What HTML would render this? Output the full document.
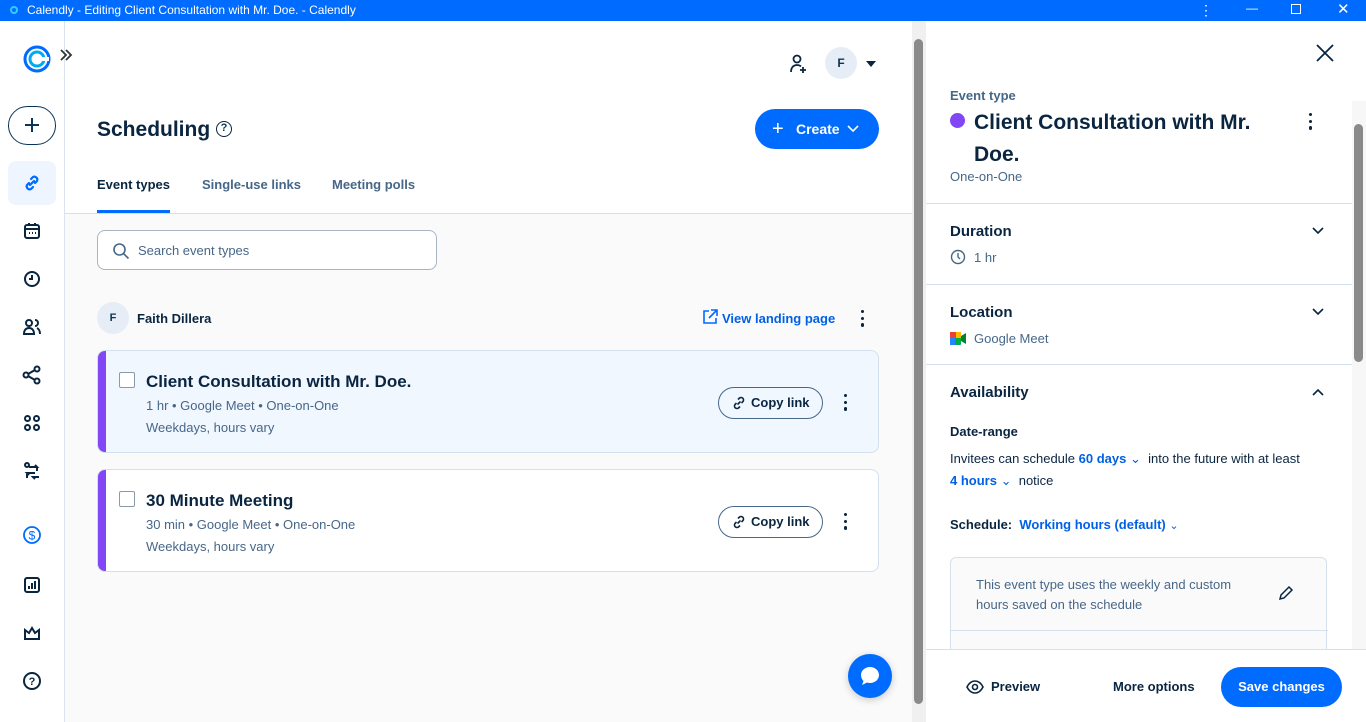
<!DOCTYPE html>
<html><head><meta charset="utf-8"><style>
*{box-sizing:border-box;margin:0;padding:0}
body{width:1366px;height:722px;overflow:hidden;font-family:"Liberation Sans",sans-serif;background:#fff;position:relative;color:#0b3558}
.abs{position:absolute}
.tb{left:0;top:0;width:1366px;height:21px;background:#006bff;color:#fff;font-size:12px;line-height:20px}
.side{left:0;top:21px;width:65px;height:701px;background:#fff;border-right:1px solid #dae4ef}
.ic{position:absolute;left:22px;width:20px;height:20px}
.main{left:65px;top:21px;width:847px;height:701px;background:#fafafa}
.hdr{left:0;top:0;width:847px;height:193px;background:#fff;border-bottom:1px solid #d4e0ed}
.card{position:absolute;left:32px;width:782px;border:1px solid #d4e0ed;border-radius:8px;overflow:hidden}
.card .bar{position:absolute;left:0;top:0;bottom:0;width:8px;background:#8247f5}
.card .cb{position:absolute;left:21px;width:16px;height:16px;border:1px solid #8a9aab;border-radius:2px;background:#fff}
.card h3{position:absolute;left:48px;font-size:17px;font-weight:bold;color:#0a2540}
.card .m{position:absolute;left:48px;font-size:13px;color:#476788}
.copy{position:absolute;left:620px;width:105px;height:32px;border:1px solid #476788;border-radius:16px;font-size:13px;color:#0a2540;font-weight:bold;line-height:30px;padding-left:32px}
.dots{position:absolute;width:4px;height:18px}
.dots i{display:block;width:3.4px;height:3.4px;border-radius:50%;background:#0a2540;margin-bottom:3.3px}
.rp{left:926px;top:21px;width:440px;height:701px;background:#fff}
.sec{position:absolute;left:0;width:426px;border-top:1px solid #d4e0ed}
.rp .t{font-size:15px;font-weight:bold;color:#0a2540}
.blue{color:#0060e6}
</style></head><body>
<div class="abs tb"><span style="position:absolute;left:10px;top:6px;width:8px;height:8px;border:2px solid #3cf;border-radius:50%"></span><span style="position:absolute;left:27px">Calendly - Editing Client Consultation with Mr. Doe. - Calendly</span>
<span style="position:absolute;left:1199px;top:0;font-size:14px">⋮</span><span style="position:absolute;left:1246px;top:-2px">—</span><span style="position:absolute;left:1291px;top:4px;width:10px;height:10px;border:1px solid #fff"></span><span style="position:absolute;left:1337px;top:0;font-size:15px">✕</span></div>

<div class="abs side">
<svg class="abs" style="left:23px;top:24px" width="30" height="30" viewBox="0 0 30 30"><circle cx="14" cy="14" r="12" fill="none" stroke="#006bff" stroke-width="3"/><circle cx="14" cy="14" r="7" fill="none" stroke="#0ae" stroke-width="3"/><rect x="16" y="12" width="10" height="4" fill="#fff"/></svg>
<div class="abs" style="left:8px;top:85px;width:48px;height:39px;border:1.5px solid #0b3558;border-radius:20px"><svg style="position:absolute;left:16px;top:11px" width="14" height="14" viewBox="0 0 14 14" stroke="#0b3558" stroke-width="2"><path d="M7 0v14M0 7h14"/></svg></div>
<div class="abs" style="left:8px;top:140px;width:48px;height:44px;background:#eef5ff;border-radius:8px"></div>
<svg class="ic" style="top:152px" viewBox="0 0 20 20" fill="none" stroke="#006bff" stroke-width="2.2" stroke-linecap="round"><path d="M8 12l4-4M9 6l2-2a3 3 0 014 4l-2 2M11 14l-2 2a3 3 0 01-4-4l2-2"/></svg>
<svg class="ic" style="top:200px" viewBox="0 0 20 20" fill="none" stroke="#0a2540" stroke-width="2"><rect x="3" y="4" width="14" height="13" rx="2"/><path d="M3 8h14M7 2v3M13 2v3M7 12h1M10 12h1M13 12h1"/></svg>
<svg class="ic" style="top:248px" viewBox="0 0 20 20" fill="none" stroke="#0a2540" stroke-width="2"><circle cx="10" cy="10" r="7"/><path d="M10 6v4H7"/></svg>
<svg class="ic" style="top:296px" viewBox="0 0 20 20" fill="none" stroke="#0a2540" stroke-width="2"><circle cx="7" cy="6" r="3"/><path d="M2 17c0-4 2-6 5-6s5 2 5 6zM13 3a3 3 0 010 6M15 11c2 1 3 3 3 6"/></svg>
<svg class="ic" style="top:344px" viewBox="0 0 20 20" fill="none" stroke="#0a2540" stroke-width="2"><circle cx="4" cy="10" r="2.5"/><circle cx="15" cy="4" r="2.5"/><circle cx="15" cy="16" r="2.5"/><path d="M6 9l7-4M6 11l7 4"/></svg>
<svg class="ic" style="top:392px" viewBox="0 0 20 20" fill="none" stroke="#0a2540" stroke-width="2"><circle cx="5.5" cy="5.5" r="2.5"/><circle cx="14.5" cy="5.5" r="2.5"/><circle cx="5.5" cy="14.5" r="2.5"/><circle cx="14.5" cy="14.5" r="2.5"/></svg>
<svg class="ic" style="top:440px" viewBox="0 0 20 20" fill="none" stroke="#0a2540" stroke-width="2"><circle cx="5" cy="4" r="2"/><path d="M7 6h8l-2-2M13 12H5l2 2M5 17V13M15 6v4"/><path d="M17 16h-6l2 2"/></svg>
<svg class="ic" style="top:504px" viewBox="0 0 20 20" fill="none" stroke="#006bff" stroke-width="1.8"><circle cx="10" cy="10" r="8"/><text x="10" y="14.5" font-size="12" text-anchor="middle" fill="#006bff" stroke="none" font-family="Liberation Sans">$</text></svg>
<svg class="ic" style="top:554px" viewBox="0 0 20 20" fill="none" stroke="#0a2540" stroke-width="2"><rect x="3" y="3" width="14" height="14" rx="2"/><path d="M7 14v-3M10 14V8M13 14V6"/></svg>
<svg class="ic" style="top:602px" viewBox="0 0 20 20" fill="none" stroke="#0a2540" stroke-width="2"><path d="M3 16V7l4 3 3-5 3 5 4-3v9z"/></svg>
<svg class="ic" style="top:650px" viewBox="0 0 20 20" fill="none" stroke="#0a2540" stroke-width="2"><circle cx="10" cy="10" r="8"/><text x="10" y="14" font-size="11" text-anchor="middle" fill="#0a2540" stroke="none" font-weight="bold" font-family="Liberation Sans">?</text></svg>
</div>

<div class="abs main">
<div class="abs hdr">
<svg class="abs" style="left:723px;top:32px" width="22" height="22" viewBox="0 0 22 22" fill="none" stroke="#0a2540" stroke-width="1.8"><circle cx="9" cy="6" r="3.5"/><path d="M3 19c0-5 3-7 6-7 2 0 3 .5 4 1.5M15 14v6M12 17h6"/></svg>
<div class="abs" style="left:760px;top:26px;width:32px;height:32px;border-radius:50%;background:#e7edf6;text-align:center;line-height:32px;font-size:12px;font-weight:bold">F</div>
<div class="abs" style="left:801px;top:40px;border:5px solid transparent;border-top:6px solid #0a2540"></div>
<div class="abs" style="left:32px;top:97px;font-size:21px;font-weight:bold;color:#0a2540">Scheduling</div>
<div class="abs" style="left:151px;top:100px;width:16px;height:16px;border:1.8px solid #0a2540;border-radius:50%;font-size:11px;font-weight:bold;text-align:center;line-height:13px">?</div>
<div class="abs" style="left:690px;top:88px;width:124px;height:40px;background:#006bff;border-radius:20px;color:#fff;font-weight:bold;font-size:14px;line-height:40px"><span style="position:absolute;left:17px;font-size:20px;font-weight:normal">+</span><span style="position:absolute;left:41px">Create</span><svg style="position:absolute;left:92px;top:15px" width="12" height="10" viewBox="0 0 12 10" fill="none" stroke="#fff" stroke-width="1.6"><path d="M1 2l5 5 5-5"/></svg></div>
<div class="abs" style="left:32px;top:156px;font-size:13px;font-weight:bold;color:#0a2540">Event types</div>
<div class="abs" style="left:32px;top:189px;width:73px;height:3px;background:#006bff"></div>
<div class="abs" style="left:137px;top:156px;font-size:13px;font-weight:bold;color:#476788">Single-use links</div>
<div class="abs" style="left:267px;top:156px;font-size:13px;font-weight:bold;color:#476788">Meeting polls</div>
</div>
<div class="abs" style="left:32px;top:209px;width:340px;height:40px;border:1px solid #a6b4c4;border-radius:8px;background:#fff"><svg style="position:absolute;left:14px;top:11px" width="18" height="18" viewBox="0 0 18 18" fill="none" stroke="#476788" stroke-width="1.6"><circle cx="7.5" cy="7.5" r="5.5"/><path d="M11.5 11.5l5 5"/></svg><span style="position:absolute;left:40px;top:12px;font-size:13px;color:#476788">Search event types</span></div>
<div class="abs" style="left:32px;top:281px;width:32px;height:32px;border-radius:50%;background:#e7edf6;text-align:center;line-height:32px;font-size:11px;font-weight:bold">F</div>
<div class="abs" style="left:72px;top:290px;font-size:13px;font-weight:bold;color:#0a2540">Faith Dillera</div>
<svg class="abs" style="left:636px;top:287px" width="18" height="18" viewBox="0 0 18 18" fill="none" stroke="#006bff" stroke-width="1.6"><path d="M8 3H3v12h12v-5M10 2h6v6M16 2l-8 8"/></svg>
<div class="abs" style="left:657px;top:290px;font-size:13px;color:#0060e6;font-weight:bold">View landing page</div>
<div class="dots" style="left:796px;top:289px"><i></i><i></i><i></i></div>
<div class="card" style="top:329px;height:103px;background:#f0f7ff"><div class="bar"></div><div class="cb" style="top:21px"></div><h3 style="top:21px">Client Consultation with Mr. Doe.</h3><div class="m" style="top:47px">1 hr • Google Meet • One-on-One</div><div class="m" style="top:69px">Weekdays, hours vary</div>
<div class="copy" style="top:36px"><svg style="position:absolute;left:12px;top:7px" width="16" height="16" viewBox="0 0 16 16" fill="none" stroke="#0a2540" stroke-width="1.6"><path d="M6.5 9.5l3-3M7 4.5l1.5-1.5a2.5 2.5 0 013.5 3.5L10.5 8M9 11.5L7.5 13a2.5 2.5 0 01-3.5-3.5L5.5 8"/></svg>Copy link</div>
<div class="dots" style="left:746px;top:43px"><i></i><i></i><i></i></div></div>
<div class="card" style="top:448px;height:103px;background:#fff"><div class="bar"></div><div class="cb" style="top:21px"></div><h3 style="top:21px">30 Minute Meeting</h3><div class="m" style="top:47px">30 min • Google Meet • One-on-One</div><div class="m" style="top:69px">Weekdays, hours vary</div>
<div class="copy" style="top:36px"><svg style="position:absolute;left:12px;top:7px" width="16" height="16" viewBox="0 0 16 16" fill="none" stroke="#0a2540" stroke-width="1.6"><path d="M6.5 9.5l3-3M7 4.5l1.5-1.5a2.5 2.5 0 013.5 3.5L10.5 8M9 11.5L7.5 13a2.5 2.5 0 01-3.5-3.5L5.5 8"/></svg>Copy link</div>
<div class="dots" style="left:746px;top:43px"><i></i><i></i><i></i></div></div>
<div class="abs" style="left:783px;top:633px;width:44px;height:44px;border-radius:50%;background:#006bff;box-shadow:0 2px 8px rgba(0,0,0,.2)"><svg style="position:absolute;left:11px;top:11px" width="22" height="22" viewBox="0 0 22 22"><path d="M11 2c5 0 9 3.5 9 8s-4 8-9 8c-1 0-2-.2-3-.5L3 20l1.5-4C3 14.5 2 12.5 2 10c0-4.5 4-8 9-8z" fill="#fff"/></svg></div>
</div>
<svg class="abs" style="left:60px;top:49px" width="13" height="12" viewBox="0 0 13 12" fill="none" stroke="#333" stroke-width="1.8"><path d="M1 1l5 5-5 5M6 1l5 5-5 5"/></svg>
<div class="abs" style="left:912px;top:21px;width:14px;height:701px;background:#f0f0f0"></div>
<div class="abs" style="left:914px;top:39px;width:9px;height:665px;background:#8a8a8a;border-radius:5px"></div>

<div class="abs rp">
<svg class="abs" style="left:390px;top:23px" width="18" height="18" viewBox="0 0 18 18" stroke="#0a2540" stroke-width="1.8"><path d="M1 1l16 16M17 1L1 17"/></svg>
<div class="abs" style="left:24px;top:67px;font-size:13px;font-weight:bold;color:#476788">Event type</div>
<div class="abs" style="left:24px;top:92px;width:15px;height:15px;border-radius:50%;background:#8247f5"></div>
<div class="abs" style="left:48px;top:86px;font-size:21px;font-weight:bold;color:#0a2540;line-height:32px;width:300px">Client Consultation with Mr. Doe.</div>
<div class="dots" style="left:383px;top:92px"><i></i><i></i><i></i></div>
<div class="abs" style="left:24px;top:148px;font-size:13px;color:#476788">One-on-One</div>
<div class="sec" style="top:182px"></div>
<div class="abs t" style="left:24px;top:202px">Duration</div>
<svg class="abs" style="left:386px;top:206px" width="12" height="8" viewBox="0 0 12 8" fill="none" stroke="#0a2540" stroke-width="1.6"><path d="M1 1l5 5 5-5"/></svg>
<svg class="abs" style="left:24px;top:228px" width="16" height="16" viewBox="0 0 16 16" fill="none" stroke="#476788" stroke-width="1.4"><circle cx="8" cy="8" r="6.5"/><path d="M8 4v4l2 2"/></svg>
<div class="abs" style="left:48px;top:229px;font-size:13px;color:#476788">1 hr</div>
<div class="sec" style="top:263px"></div>
<div class="abs t" style="left:24px;top:283px">Location</div>
<svg class="abs" style="left:386px;top:287px" width="12" height="8" viewBox="0 0 12 8" fill="none" stroke="#0a2540" stroke-width="1.6"><path d="M1 1l5 5 5-5"/></svg>
<svg class="abs" style="left:24px;top:311px" width="16" height="13" viewBox="0 0 16 13"><rect x="0" y="0" width="11" height="13" rx="1" fill="#00ac47"/><rect x="0" y="0" width="6" height="6" fill="#ea4335"/><rect x="6" y="0" width="5" height="6" fill="#ffba00"/><rect x="0" y="6" width="5" height="7" fill="#2684fc"/><path d="M11 4l5-3v11l-5-3z" fill="#00832d"/></svg>
<div class="abs" style="left:48px;top:310px;font-size:13px;color:#476788">Google Meet</div>
<div class="sec" style="top:343px"></div>
<div class="abs t" style="left:24px;top:363px">Availability</div>
<svg class="abs" style="left:386px;top:367px" width="12" height="8" viewBox="0 0 12 8" fill="none" stroke="#0a2540" stroke-width="1.6"><path d="M1 7l5-5 5 5"/></svg>
<div class="abs" style="left:24px;top:403px;font-size:13px;font-weight:bold;color:#0a2540">Date-range</div>
<div class="abs" style="left:24px;top:430px;font-size:13px;color:#0a2540">Invitees can schedule <b class="blue">60 days</b> <span class="blue">⌄</span>&nbsp; into the future with at least</div>
<div class="abs" style="left:24px;top:452px;font-size:13px;color:#0a2540"><b class="blue">4 hours</b> <span class="blue">⌄</span>&nbsp; notice</div>
<div class="abs" style="left:24px;top:496px;font-size:13px;color:#0a2540"><b>Schedule:</b>&nbsp; <b class="blue">Working hours (default)</b> <span class="blue" style="font-size:11px">⌄</span></div>
<div class="abs" style="left:24px;top:536px;width:377px;height:120px;border:1px solid #d4e0ed;border-radius:6px;background:#fafafa"><div style="position:absolute;left:25px;top:17px;font-size:13px;color:#476788;line-height:20px;width:290px">This event type uses the weekly and custom hours saved on the schedule</div>
<svg style="position:absolute;left:326px;top:26px" width="18" height="18" viewBox="0 0 18 18" fill="none" stroke="#0a2540" stroke-width="1.5"><path d="M3 15l1-4 8-8 3 3-8 8z"/></svg>
<div style="position:absolute;left:0;top:72px;width:377px;border-top:1px solid #d4e0ed"></div></div>
<div class="abs" style="left:426px;top:80px;width:14px;height:548px;background:#f7f7f7"></div>
<div class="abs" style="left:428px;top:103px;width:9px;height:238px;background:#8a8a8a;border-radius:5px"></div>
<div class="abs" style="left:0;top:628px;width:440px;height:73px;background:#fff;border-top:1px solid #d4e0ed"></div>
<svg class="abs" style="left:40px;top:659px" width="18" height="14" viewBox="0 0 18 14" fill="none" stroke="#0a2540" stroke-width="1.6"><path d="M1 7c2-4 5-6 8-6s6 2 8 6c-2 4-5 6-8 6s-6-2-8-6z"/><circle cx="9" cy="7" r="2.5"/></svg>
<div class="abs" style="left:65px;top:658px;font-size:13px;font-weight:bold;color:#0a2540">Preview</div>
<div class="abs" style="left:187px;top:658px;font-size:13px;font-weight:bold;color:#0a2540">More options</div>
<div class="abs" style="left:295px;top:646px;width:121px;height:40px;border-radius:20px;background:#006bff;color:#fff;font-size:13px;font-weight:bold;text-align:center;line-height:40px">Save changes</div>
</div>
</body></html>
